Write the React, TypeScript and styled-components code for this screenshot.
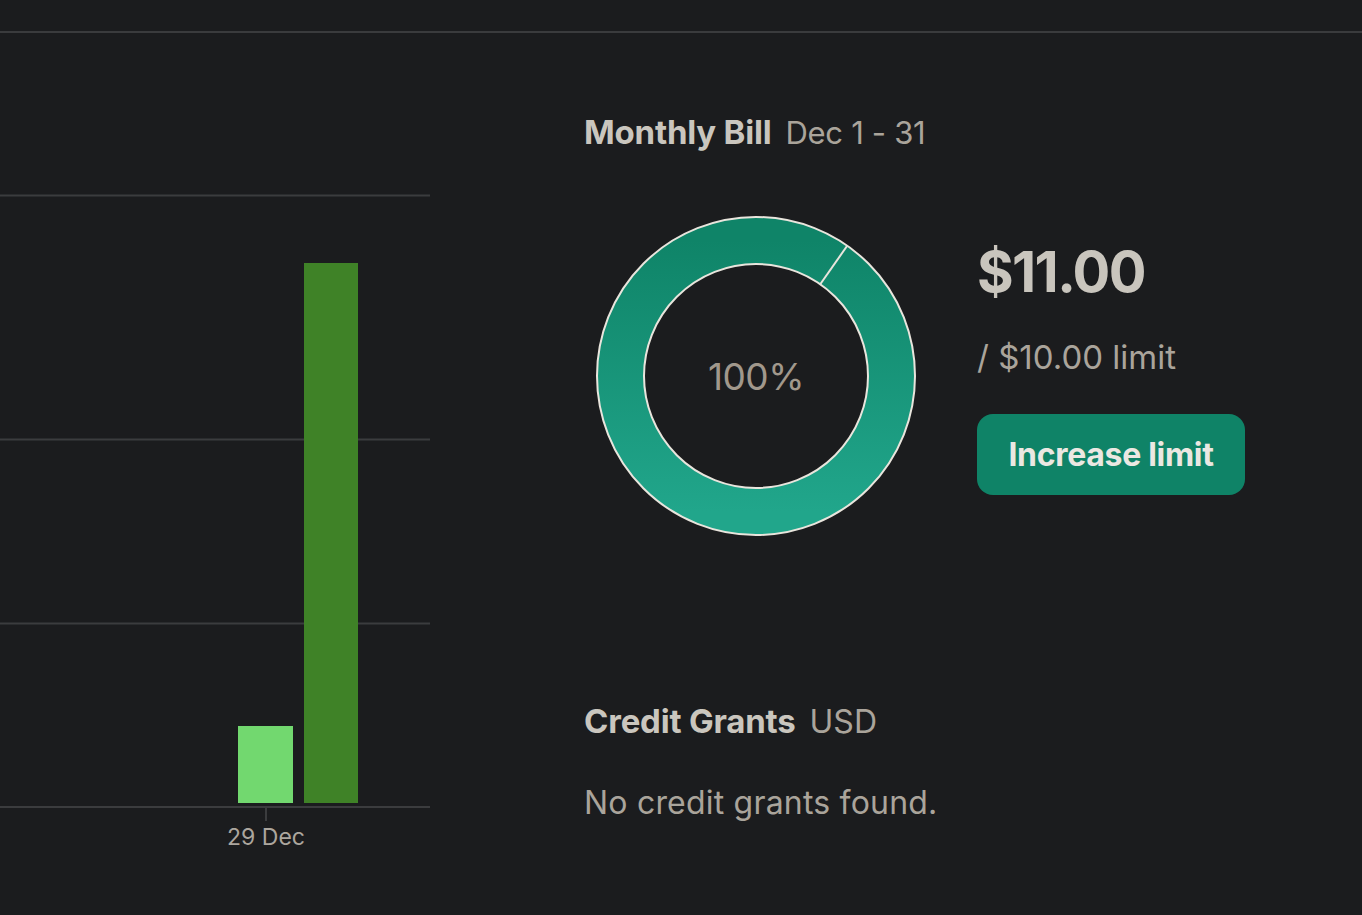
import React from "react";
import styled, { createGlobalStyle } from "styled-components";

const GlobalStyle = createGlobalStyle`
  html, body {
    margin: 0;
    padding: 0;
    background: #1b1c1e;
  }
  body {
    font-family: Inter, "Liberation Sans", sans-serif;
    color: #c9c5bd;
  }
`;

const bars = [
  { x: 238, w: 55, top: 553, color: "#72d86f" },
  { x: 304, w: 54, top: 90, color: "#3f8227" },
];

const gridLines = [22, 266, 450];

const UsageChart: React.FC = () => (
  <ChartSvg width={430} height={700} viewBox="0 0 430 700">
    {gridLines.map((y) => (
      <line key={y} x1={0} x2={430} y1={y + 0.5} y2={y + 0.5} stroke="#3b3c3e" strokeWidth={2} />
    ))}
    {bars.map((b) => (
      <rect key={b.x} x={b.x} y={b.top} width={b.w} height={630 - b.top} fill={b.color} />
    ))}
    <line x1={0} x2={430} y1={634} y2={634} stroke="#3b3c3e" strokeWidth={2} />
    <line x1={266} x2={266} y1={635} y2={648} stroke="#3b3c3e" strokeWidth={2} />
    <AxisLabel x={266} y={672} textAnchor="middle">
      29 Dec
    </AxisLabel>
  </ChartSvg>
);

const Donut: React.FC = () => {
  const c = 160;
  const outer = 159;
  const inner = 112;
  const a = (35 * Math.PI) / 180;
  const p1 = { x: c + inner * Math.sin(a), y: c - inner * Math.cos(a) };
  const p2 = { x: c + outer * Math.sin(a), y: c - outer * Math.cos(a) };
  const mid = (outer + inner) / 2;
  return (
    <DonutWrap>
      <svg width={320} height={320} viewBox="0 0 320 320">
        <defs>
          <linearGradient id="ring" x1="0" y1="0" x2="0" y2="1">
            <stop offset="0" stopColor="#0f8468" />
            <stop offset="1" stopColor="#21a68b" />
          </linearGradient>
        </defs>
        <circle cx={c} cy={c} r={mid} fill="none" stroke="url(#ring)" strokeWidth={outer - inner} />
        <circle cx={c} cy={c} r={outer} fill="none" stroke="#e9e5dd" strokeWidth={2} />
        <circle cx={c} cy={c} r={inner} fill="none" stroke="#e9e5dd" strokeWidth={2} />
        <line x1={p1.x} y1={p1.y} x2={p2.x} y2={p2.y} stroke="#e9e5dd" strokeWidth={2} />
      </svg>
      <Percent>100%</Percent>
    </DonutWrap>
  );
};

const App: React.FC = () => (
  <>
    <GlobalStyle />
    <Page>
      <TopBar />
      <Content>
        <ChartColumn>
          <UsageChart />
        </ChartColumn>
        <SideColumn>
          <SectionTitle>
            <strong>Monthly Bill</strong>
            <span>Dec 1 - 31</span>
          </SectionTitle>
          <BillRow>
            <Donut />
            <Amounts>
              <Total>$11.00</Total>
              <Limit>/ $10.00 limit</Limit>
              <IncreaseButton type="button">Increase limit</IncreaseButton>
            </Amounts>
          </BillRow>
          <GrantsTitle>
            <strong>Credit Grants</strong>
            <span>USD</span>
          </GrantsTitle>
          <EmptyText>No credit grants found.</EmptyText>
        </SideColumn>
      </Content>
    </Page>
  </>
);

const Page = styled.div`
  min-height: 915px;
  background: #1b1c1e;
  overflow: hidden;
`;

const TopBar = styled.div`
  height: 33px;
  border-bottom: 2px solid #3a3b3d;
  box-sizing: border-box;
`;

const Content = styled.div`
  display: flex;
  align-items: flex-start;
`;

const ChartColumn = styled.div`
  width: 430px;
  flex-shrink: 0;
  padding-top: 140px;
`;

const ChartSvg = styled.svg`
  display: block;
`;

const AxisLabel = styled.text`
  font-family: Inter, "Liberation Sans", sans-serif;
  font-size: 23px;
  fill: #aca69e;
`;

const SideColumn = styled.div`
  margin-left: 154px;
  padding-top: 79px;
  display: flex;
  flex-direction: column;
`;

const SectionTitle = styled.div`
  display: flex;
  align-items: baseline;
  gap: 14px;
  font-size: 33px;
  line-height: 40px;
  white-space: nowrap;

  strong {
    font-weight: 700;
    color: #cac6be;
    letter-spacing: -0.2px;
  }
  span {
    font-weight: 400;
    font-size: 31px;
    letter-spacing: -0.3px;
    color: #aaa49b;
  }
`;

const GrantsTitle = styled(SectionTitle)`
  margin-top: 165px;

  span {
    font-size: 32px;
    letter-spacing: 0;
  }
`;

const BillRow = styled.div`
  display: flex;
  align-items: flex-start;
  margin-top: 63px;
`;

const DonutWrap = styled.div`
  position: relative;
  width: 320px;
  height: 320px;
  margin-left: 12px;

  svg {
    display: block;
  }
`;

const Percent = styled.div`
  position: absolute;
  inset: 0;
  display: flex;
  align-items: center;
  justify-content: center;
  font-size: 37px;
  font-weight: 400;
  color: #a1988c;
  letter-spacing: -0.5px;
`;

const Amounts = styled.div`
  margin-left: 61px;
  padding-top: 23px;
  display: flex;
  flex-direction: column;
  align-items: flex-start;
`;

const Total = styled.div`
  font-size: 56px;
  line-height: 66px;
  font-weight: 700;
  letter-spacing: -1.6px;
  color: #c9c5bd;
`;

const Limit = styled.div`
  margin-top: 32px;
  font-size: 33px;
  line-height: 40px;
  letter-spacing: 0;
  color: #aaa49b;
`;

const IncreaseButton = styled.button`
  margin-top: 37px;
  width: 268px;
  height: 81px;
  border: none;
  border-radius: 16px;
  background: #0f8367;
  color: #ebe8e2;
  font-family: Inter, "Liberation Sans", sans-serif;
  font-size: 32px;
  font-weight: 700;
  letter-spacing: -0.3px;
  cursor: pointer;
`;

const EmptyText = styled.div`
  margin-top: 42px;
  font-size: 32px;
  line-height: 38px;
  letter-spacing: 0.2px;
  color: #aaa49b;
`;

export default App;
